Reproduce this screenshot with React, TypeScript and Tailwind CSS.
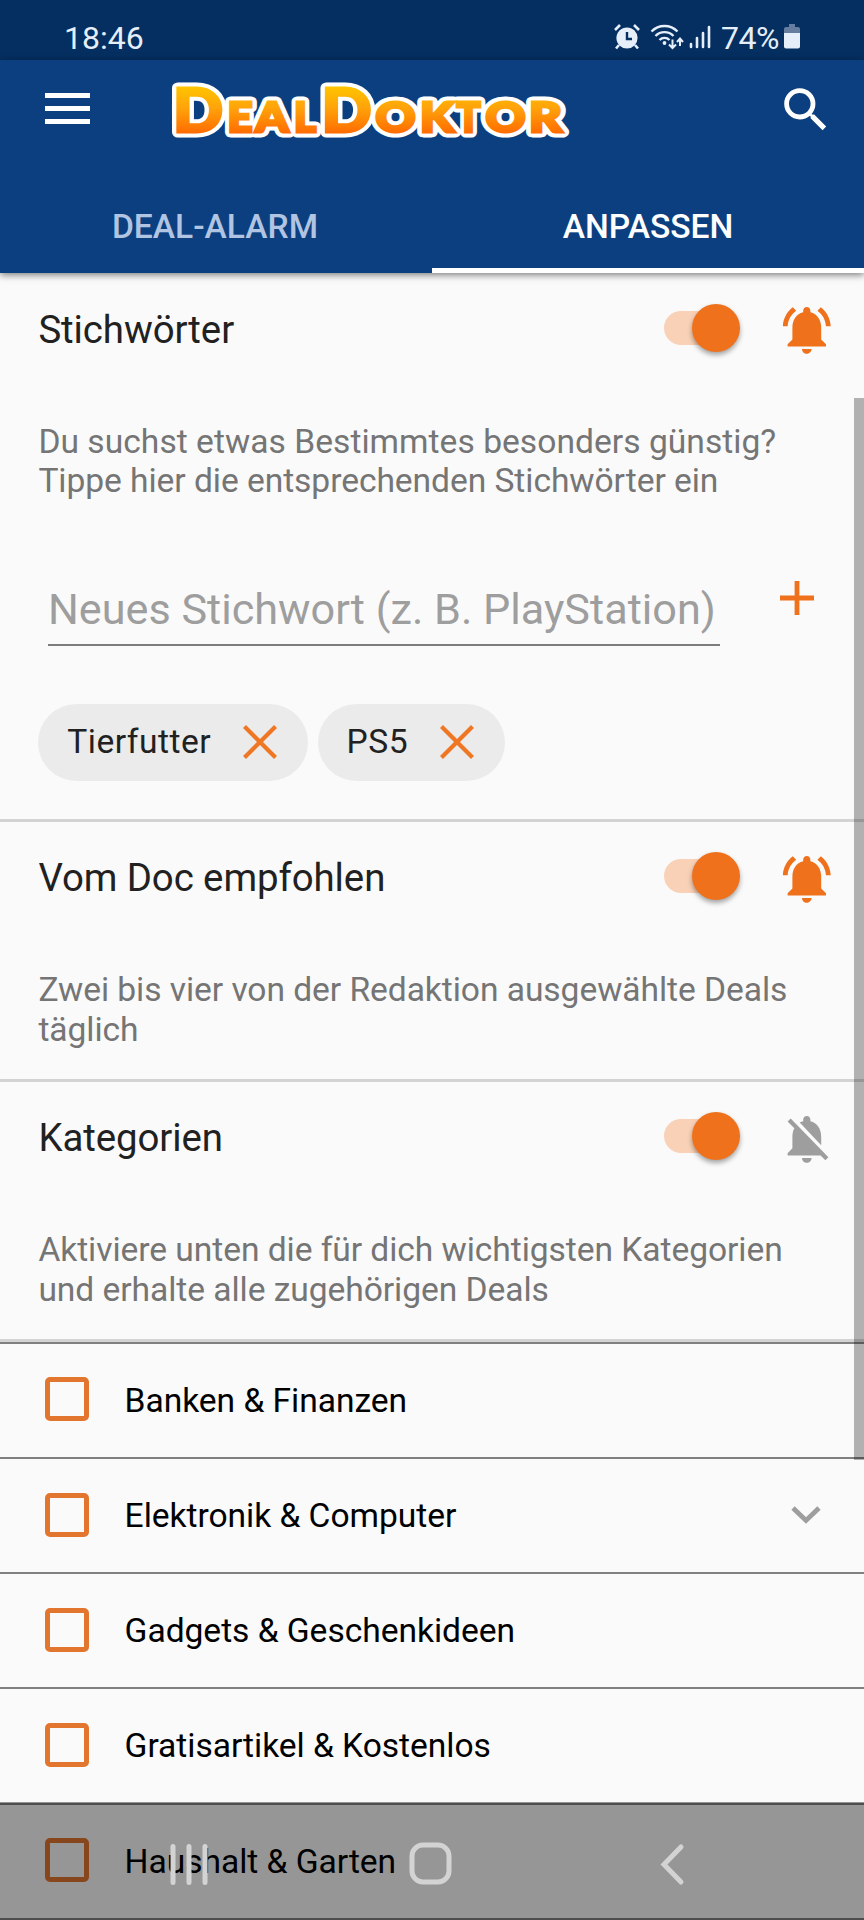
import type { ReactNode } from "react"

const CATEGORIES = [
  { label: "Banken & Finanzen" },
  { label: "Elektronik & Computer", expandable: true },
  { label: "Gadgets & Geschenkideen" },
  { label: "Gratisartikel & Kostenlos" },
  { label: "Haushalt & Garten" },
]

// x and w are the box of each letter, big marks the tall capitals
const LOGO = [
  { ch: "D", x: 7, w: 50, big: true },
  { ch: "E", x: 61.5, w: 25 },
  { ch: "A", x: 89.5, w: 33 },
  { ch: "L", x: 128, w: 22 },
  { ch: "D", x: 155.5, w: 50, big: true },
  { ch: "O", x: 209.500, w: 40 },
  { ch: "K", x: 254, w: 34 },
  { ch: "T", x: 290.500, w: 24 },
  { ch: "O", x: 319.5, w: 40 },
  { ch: "R", x: 363, w: 33 },
]

function Logo() {
  const letters = (paint: Record<string, string | number>) =>
    LOGO.map(({ ch, x, w, big }, i) => (
      <text
        key={i}
        x={x}
        y={66.5}
        textLength={w}
        lengthAdjust="spacingAndGlyphs"
        fontSize={big ? 60 : 41}
        {...paint}
      >
        {ch}
      </text>
    ))

  return (
    <svg width="412" height="92" viewBox="0 0 412 92" className="font-['Lato',sans-serif] font-black">
      <defs>
        <linearGradient id="logo" gradientUnits="userSpaceOnUse" x1="0" y1="22" x2="0" y2="69">
          <stop offset="0" stopColor="#ffc400" />
          <stop offset="0.45" stopColor="#ffa30a" />
          <stop offset="1" stopColor="#ff6a00" />
        </linearGradient>
      </defs>
      {letters({ fill: "#fff", stroke: "#fff", strokeWidth: 11, strokeLinejoin: "round" })}
      {letters({ fill: "url(#logo)", stroke: "url(#logo)", strokeWidth: 3 })}
    </svg>
  )
}

function StatusBar() {
  return (
    <div className="flex h-[60px] items-start bg-[#052f60] pl-16 pr-16 pt-[19px] text-[#e6eefa]">
      <span className="text-[32px] leading-[38px]">18:46</span>
      <div className="ml-auto flex items-start">
        <svg width="26" height="26" viewBox="0 0 26 26" className="mt-[5px]">
          <circle cx="13" cy="14" r="10.6" fill="currentColor" />
          <path d="M1 6l5-5M25 6l-5-5M5 21l-3 3.5M21 21l3 3.5" stroke="currentColor" strokeWidth="2.6" />
          <path d="M13 8v7h5" fill="none" stroke="#052f60" strokeWidth="2.4" />
        </svg>
        <svg width="34" height="26" viewBox="0 0 34 26" className="ml-[10px] mt-[5px]" fill="none" stroke="currentColor" strokeWidth="2.4">
          <path d="M1.500 7.500a18 18 0 0 1 26 0M5.500 12a12.500 12.500 0 0 1 18 0M9.500 16a7 7 0 0 1 10 0" />
          <circle cx="14.500" cy="19" r="1.900" fill="currentColor" stroke="none" />
          <path d="M22.500 15.500v8M19 20.500l3.500 3.500 3.500-3.500M30 22v-7M27 18l3-3.500 3 3.500" strokeWidth="2" />
        </svg>
        <svg width="22" height="24" viewBox="0 0 22 24" className="ml-[5px] mt-[6px]" stroke="currentColor" strokeWidth="2.6" strokeLinecap="round">
          <path d="M2 19v3M8 13v9M14 8v14M20 2v20" />
        </svg>
        <span className="ml-[10px] text-[32px] leading-[38px] tracking-[-0.5px]">74%</span>
        <svg width="16" height="26" viewBox="0 0 16 26" className="ml-[5px] mt-[5px]">
          <path d="M5 0h6v3h3q2 0 2 2v5H0V5q0-2 2-2h3z" fill="#667d9f" />
          <path d="M0 9h16v13.500q0 2-2 2H2q-2 0-2-2z" fill="currentColor" />
        </svg>
      </div>
    </div>
  )
}

function Header() {
  return (
    <header className="relative z-10 bg-[#0c3f7f] text-white shadow-[0_2px_7px_rgba(0,0,0,0.5)]">
      <div className="flex h-[119px] items-start pl-[45px] pr-[29px]">
        <div className="mt-[33px] flex w-[45px] flex-col gap-2">
          <div className="h-[5px] bg-white" />
          <div className="h-[5px] bg-white" />
          <div className="h-[5px] bg-white" />
        </div>
        <div className="ml-[76px] mt-[5px]">
          <Logo />
        </div>
        <svg width="57.600" height="57.600" viewBox="0 0 24 24" fill="currentColor" className="ml-auto mt-[21px]">
          <path d="M15.500 14h-.79l-.28-.27A6.471 6.471 0 0 0 16 9.500 6.500 6.500 0 1 0 9.500 16c1.610 0 3.090-.59 4.230-1.570l.27.28v.79l5 4.990L20.490 19l-4.990-5zm-6 0C7.010 14 5 11.990 5 9.500S7.010 5 9.500 5 14 7.010 14 9.500 11.990 14 9.500 14z" />
        </svg>
      </div>
      <div className="grid h-[94px] grid-cols-2 text-center text-[33.6px] font-medium">
        <div className="pr-0.5 pt-7 leading-10 text-[#b1c5e2]">DEAL-ALARM</div>
        <div className="border-b-[5px] border-white pt-7 leading-10">ANPASSEN</div>
      </div>
    </header>
  )
}

function Toggle() {
  return (
    <div className="flex h-12 w-[76.5px] items-center">
      <div className="h-[34px] w-[68px] shrink-0 rounded-full bg-[#f9d1b7]" />
      <div className="-ml-10 size-12 shrink-0 rounded-full bg-[#ef711c] shadow-[0_3px_5px_rgba(0,0,0,0.35)]" />
    </div>
  )
}

function Bell({ muted }: { muted?: boolean }) {
  return (
    <svg width="57.600" height="57.600" viewBox="0 0 24 24" fill={muted ? "#9e9e9e" : "#ef711c"}>
      {muted ? (
        <path d="M20 18.690L7.840 6.140 5.270 3.490 4 4.760l2.800 2.800v.01c-.52.99-.8 2.160-.8 3.420v5l-2 2v1h13.730l2 2L21 19.720l-1-1.030zM12 22c1.110 0 2-.89 2-2h-4c0 1.110.89 2 2 2zm6-7.320V11c0-3.080-1.640-5.640-4.500-6.320V4c0-.83-.67-1.500-1.500-1.500s-1.500.67-1.500 1.500v.68c-.15.03-.29.08-.42.12-.1.03-.2.07-.3.110h-.01c-.01 0-.01 0-.02.01-.23.09-.46.2-.68.310 0 0-.01 0-.01.01L18 14.680z" />
      ) : (
        <path d="M7.580 4.080L6.150 2.650C3.750 4.480 2.170 7.300 2.030 10.500h2c.15-2.650 1.510-4.970 3.550-6.420zm12.390 6.420h2c-.15-3.200-1.730-6.020-4.120-7.850l-1.420 1.430c2.020 1.450 3.390 3.770 3.540 6.420zM18 11c0-3.070-1.640-5.640-4.500-6.320V4c0-.83-.67-1.500-1.500-1.500s-1.500.67-1.500 1.500v.68C7.630 5.360 6 7.920 6 11v5l-2 2v1h16v-1l-2-2v-5zm-6 11c.14 0 .27-.01.4-.04.65-.14 1.180-.58 1.440-1.180.1-.24.150-.5.150-.78h-4c.01 1.100.9 2 2.010 2z" />
      )}
    </svg>
  )
}

interface SectionProps {
  title: string
  muted?: boolean
  text: ReactNode
  children?: ReactNode
}

function Section({ title, muted, text, children }: SectionProps) {
  return (
    <section className="border-b-[3px] border-[#d3d3d3]">
      <div className="flex h-[109px] items-center pl-[38.4px] pr-7">
        <h2 className="pt-[3px] text-[38.4px] leading-[45px] tracking-[-0.08px] text-[#212121]">{title}</h2>
        <div className="ml-auto">
          <Toggle />
        </div>
        <div className="ml-[37.5px] mt-[5px]">
          <Bell muted={muted} />
        </div>
      </div>
      <div className="whitespace-nowrap pb-[29.6px] pl-[38.4px] pt-[39.6px] text-[33.6px] leading-[39.4px] tracking-[-0.06px] text-[#757575]">
        {text}
      </div>
      {children}
    </section>
  )
}

function Chip({ label }: { label: string }) {
  return (
    <div className="flex h-[76.8px] items-center gap-8 rounded-full bg-[#ebebeb] pl-[28.8px] pr-[31px] text-[33.6px] tracking-[0.5px] text-[#212121]">
      {label}
      <svg width="34" height="34" viewBox="0 0 34 34" stroke="#ef7622" strokeWidth="4.200">
        <path d="M1.500 1.500l31 31M32.500 1.500l-31 31" />
      </svg>
    </div>
  )
}

function NavBar() {
  return (
    <div className="absolute inset-x-0 bottom-0 z-20 h-[118px] bg-black/40">
      <svg width="864" height="118" viewBox="0 0 864 118" fill="none" stroke="#d3d3d3" strokeWidth="5" strokeLinecap="round">
        <path d="M173 44.500v36M189 44.500v36M205 44.500v36" />
        <rect x="412" y="43" width="37" height="37" rx="11" />
        <path d="M681 45l-17 17.500 17 17.500" />
      </svg>
    </div>
  )
}

export default function App() {
  return (
    <div className="relative h-[1920px] w-[864px] overflow-hidden bg-[#fafafa] font-['Roboto',sans-serif]">
      <StatusBar />
      <Header />

      <Section
        title="Stichwörter"
        text={
          <>
            <p className="tracking-[0.03px]">Du suchst etwas Bestimmtes besonders günstig?</p>
            <p>Tippe hier die entsprechenden Stichwörter ein</p>
          </>
        }
      >
        <div className="flex items-start pl-12 pt-[41px]">
          <div className="h-[75px] w-[672px] whitespace-nowrap border-b-[2.4px] border-[#7c7c7c] pt-[13px] text-[43.2px] leading-[51px] text-[#9e9e9e]">
            Neues Stichwort (z. B. PlayStation)
          </div>
          <svg width="34" height="34" viewBox="0 0 34 34" stroke="#ef711c" strokeWidth="4.800" className="ml-[60px] mt-[10px]">
            <path d="M17 0v34M0 17h34" />
          </svg>
        </div>
        <div className="flex gap-[9.6px] pb-[38px] pl-[38.4px] pt-[58px]">
          <Chip label="Tierfutter" />
          <Chip label="PS5" />
        </div>
      </Section>

      <Section
        title="Vom Doc empfohlen"
        text={
          <>
            <p>Zwei bis vier von der Redaktion ausgewählte Deals</p>
            <p>täglich</p>
          </>
        }
      />

      <Section
        title="Kategorien"
        text={
          <>
            <p>Aktiviere unten die für dich wichtigsten Kategorien</p>
            <p>und erhalte alle zugehörigen Deals</p>
          </>
        }
        muted
      />

      <ul>
        {CATEGORIES.map(({ label, expandable }) => (
          <li key={label} className="flex h-[115.2px] items-center border-t-2 border-[#808080] pb-0.5 pl-[45px] pr-[43px]">
            <div className="size-11 rounded-[5px] border-[5px] border-[#e2762f]" />
            <span className="ml-[35.6px] pt-[3px] text-[33.6px] leading-10 tracking-[-0.04px] text-black">{label}</span>
            {expandable && (
              <svg width="30" height="18" viewBox="0 0 30 18" fill="none" stroke="#9e9e9e" strokeWidth="4.800" className="ml-auto">
                <path d="M2 2l13 12.500L28 2" />
              </svg>
            )}
          </li>
        ))}
      </ul>
      <div className="h-[3px] bg-[#808080]" />

      {/* Scroll thumb */}
      <div className="absolute right-0 top-[398px] h-[1062px] w-[9.6px] bg-black/29" />
      <NavBar />
    </div>
  )
}
